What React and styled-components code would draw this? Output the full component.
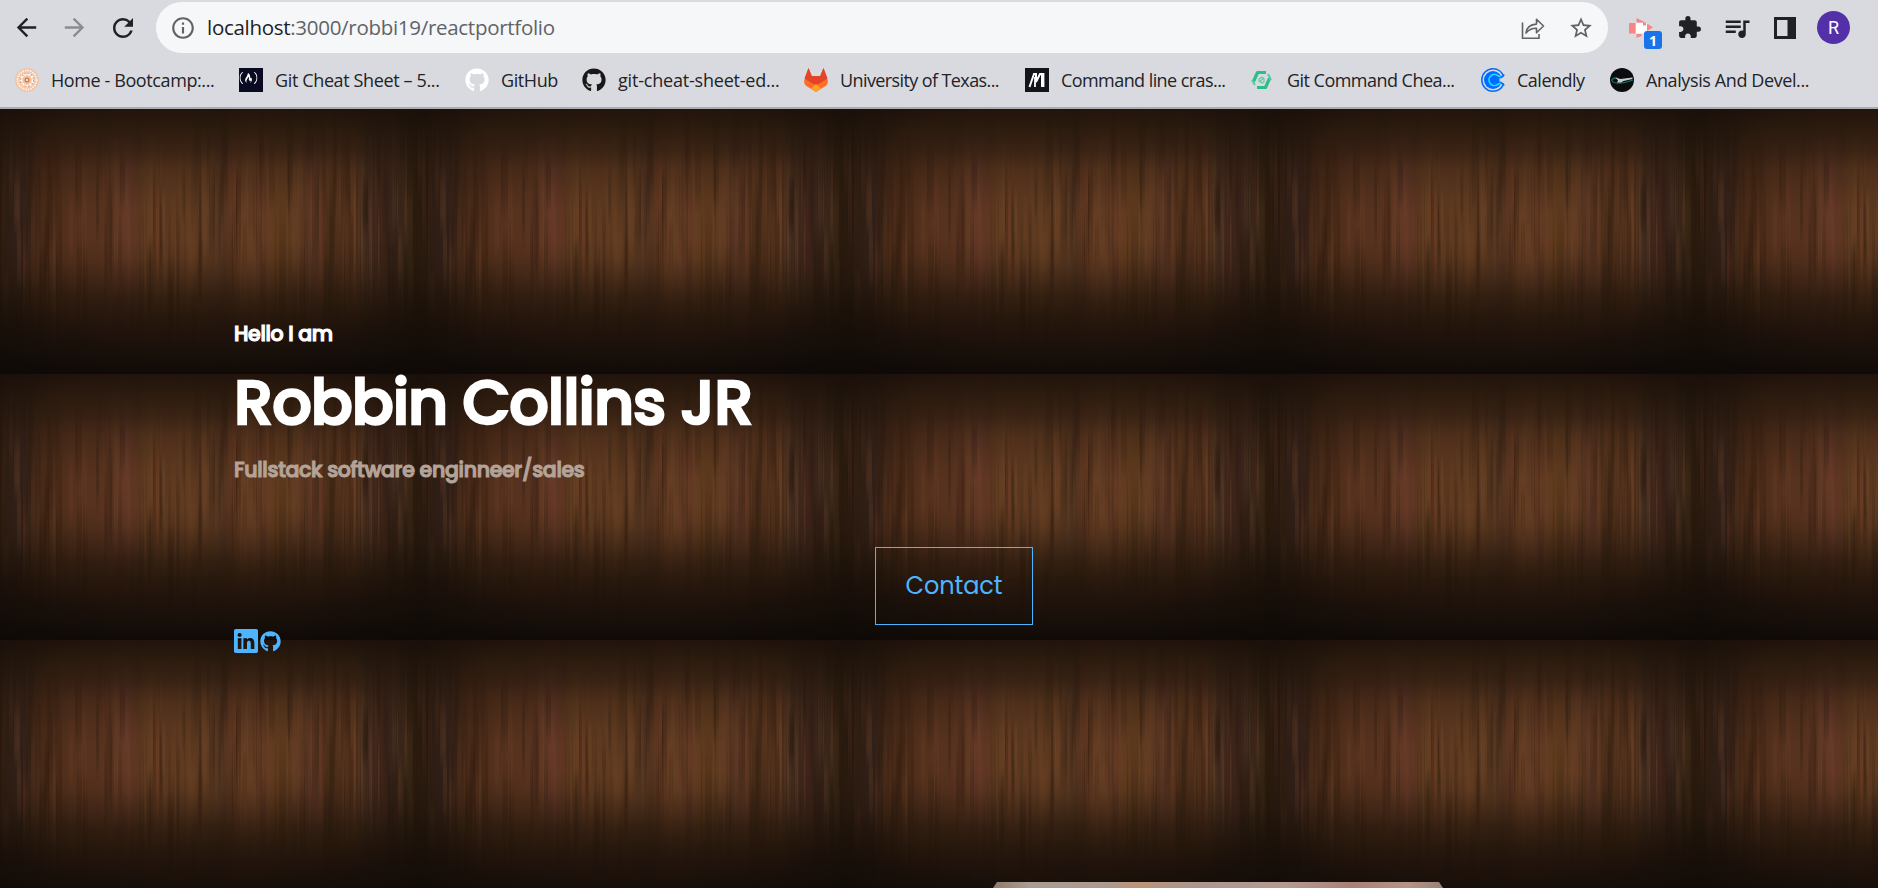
import React from "react";
import styled, { createGlobalStyle } from "styled-components";
import { MdArrowBack, MdArrowForward, MdRefresh, MdInfoOutline, MdStarBorder, MdExtension, MdQueueMusic } from "react-icons/md";
import { BsLinkedin } from "react-icons/bs";
import { FaGithub, FaFreeCodeCamp } from "react-icons/fa";

const TILE_W = 426;
const TILE_H = 266;

const planks = [
  [0, "#2b1b0f"], [22, "#33211a"], [30, "#3a2316"], [46, "#492a17"], [72, "#55311d"],
  [112, "#58331f"], [127, "#643828"], [136, "#5a3520"], [148, "#623d21"], [170, "#5e3920"],
  [196, "#613c20"], [222, "#543521"], [232, "#603820"], [246, "#663e23"], [262, "#6a3e27"],
  [276, "#5e3a1d"], [298, "#5f3a22"], [314, "#573323"], [326, "#4e3019"], [340, "#4c2d1a"],
  [354, "#55321c"], [361, "#47301e"], [366, "#3a261b"], [384, "#40261c"], [396, "#35241a"],
  [408, "#302213"], [416, "#2c1b0d"], [426, "#2d1d12"],
];

const shadeStops = [
  [0, "#20120c", 0.97], [16, "#22150b", 0.88], [42, "#25170d", 0.66], [62, "#28180e", 0.34],
  [88, "#28180e", 0.1], [105, "#28180e", 0], [132, "#28180e", 0], [150, "#26170c", 0.14],
  [168, "#24160c", 0.4], [186, "#20140a", 0.66], [206, "#1e1209", 0.84], [226, "#1b100a", 0.93],
  [246, "#160e09", 0.96], [266, "#120b08", 1],
];

const makeStreaks = (count) => {
  let s = 7919;
  const next = () => {
    s = (s * 16807) % 2147483647;
    return s / 2147483647;
  };
  return Array.from({ length: count }, (_, id) => {
    const tone = next();
    return {
      id,
      x: Math.floor(next() * TILE_W),
      y: Math.floor(next() * 190) - 30,
      w: 1 + Math.floor(next() * 7),
      h: 60 + Math.floor(next() * 110),
      tone: tone < 0.5 ? "dark" : tone < 0.88 ? "light" : "red",
      opacity: 0.06 + next() * 0.18,
    };
  });
};

const streaks = makeStreaks(330);

const Global = createGlobalStyle`
  html, body { margin: 0; height: 100%; overflow: hidden; }
  * { box-sizing: border-box; }
`;

const Window = styled.div`
  display: flex;
  flex-direction: column;
  height: 888px;
  width: 1878px;
  overflow: hidden;
  font-family: "Segoe UI", "Open Sans", "Noto Sans", sans-serif;
`;

const Chrome = styled.header`
  height: 109px;
  flex: none;
  background: #d9dadf;
  border-bottom: 2px solid #a9adb0;
`;

const Toolbar = styled.div`
  display: flex;
  align-items: center;
  height: 55px;
  padding-left: 12px;
`;

const NavButton = styled.span`
  display: flex;
  width: 48px;
  color: ${(p) => (p.$muted ? "#8b8c91" : "#202124")};
`;

const AddressBar = styled.div`
  display: flex;
  align-items: center;
  width: 1452px;
  height: 51px;
  padding: 0 14px;
  border-radius: 26px;
  background: #f6f7f9;
  color: #5f6368;
`;

const Url = styled.span`
  flex: 1;
  margin-left: 11px;
  padding-bottom: 1px;
  font-size: 20.5px;
  letter-spacing: -0.29px;
  white-space: nowrap;
  b { font-weight: 400; color: #202124; }
`;

const AddressActions = styled.span`
  display: flex;
  align-items: center;
  gap: 23px;
`;

const Extensions = styled.div`
  display: flex;
  align-items: center;
  margin-left: 21px;
  color: #202124;
`;

const ExtensionSlot = styled.span`
  position: relative;
  display: flex;
  width: ${(p) => p.$width}px;
`;

const Badge = styled.span`
  position: absolute;
  left: 15px;
  top: 14px;
  width: 18px;
  height: 18px;
  border-radius: 3px;
  background: #1a73e8;
  color: #fff;
  font: 700 14px/19px "Open Sans", sans-serif;
  text-align: center;
`;

const Avatar = styled.span`
  width: 33px;
  height: 33px;
  border-radius: 50%;
  background: #5430a8;
  color: #fff;
  font: 400 18px/34px Roboto, sans-serif;
  text-align: center;
`;

const Bookmarks = styled.nav`
  display: flex;
  align-items: center;
  height: 50px;
  padding-left: 15px;
`;

const Bookmark = styled.a`
  display: flex;
  flex: none;
  align-items: center;
  gap: 12px;
  width: ${(p) => p.$width}px;
  color: #222327;
  font-size: 18px;
  line-height: 24px;
  letter-spacing: ${(p) => p.$tracking}px;
  white-space: nowrap;
  svg { flex: none; }
`;

const BookmarkLabel = styled.span`
  padding-bottom: 1px;
`;

const Page = styled.main`
  position: relative;
  isolation: isolate;
  display: flex;
  flex: 1;
  flex-direction: column;
  min-height: 0;
  padding: 0 234px;
  background: #1e110b;
  font-family: Poppins, Inter, sans-serif;
  color: #fff;
  > * { flex-shrink: 0; }
`;

const Backdrop = styled.svg`
  position: absolute;
  inset: 0;
  z-index: -1;
  width: 100%;
  height: 100%;
`;

const Line = styled.h5`
  margin: ${(p) => p.$top}px 0 0;
  font-size: 20.5px;
  line-height: 30px;
  font-weight: 500;
  -webkit-text-stroke: 1.1px currentColor;
  letter-spacing: ${(p) => p.$tracking}px;
  color: ${(p) => (p.$light ? "#b3a398" : "#fff")};
`;

const Name = styled.h1`
  margin: 18px 0 0;
  font-size: 62px;
  line-height: 72px;
  font-weight: 500;
  -webkit-text-stroke: 2.6px currentColor;
  letter-spacing: -1.02px;
  white-space: nowrap;
`;

const Contact = styled.a`
  display: flex;
  align-items: center;
  justify-content: center;
  align-self: flex-start;
  width: 158px;
  height: 78px;
  margin: 62px 0 0 641px;
  padding-bottom: 1px;
  border: 1px solid #4db5ff;
  color: #4db5ff;
  font-size: 24px;
  letter-spacing: -0.1px;
`;

const Socials = styled.div`
  display: flex;
  align-items: center;
  gap: 2px;
  margin-top: 4px;
  color: #4db5ff;
`;

const Portrait = styled.div`
  align-self: flex-start;
  width: 450px;
  height: 6px;
  margin: 229px 0 0 759px;
  clip-path: polygon(4px 0, 446px 0, 450px 100%, 0 100%);
  background: linear-gradient(90deg, #8f7b68, #aa9c92 8%, #ad9990 25%, #ba9478 32%, #aa968f 45%, #b59a92 65%, #a98078 80%, #b59388 92%, #9a8078);
`;

const streakTones = { dark: "#1d1007", light: "#7c4c2c", red: "#733726" };

const WoodTexture = () => (
  <Backdrop aria-hidden="true">
    <defs>
      <linearGradient id="planks">
        {planks.map(([x, c]) => <stop key={x} offset={x / TILE_W} stopColor={c} />)}
      </linearGradient>
      <linearGradient id="shade" x2="0" y2="1">
        {shadeStops.map(([y, c, a]) => (
          <stop key={y} offset={y / TILE_H} stopColor={c} stopOpacity={a} />
        ))}
      </linearGradient>
      {Object.entries(streakTones).map(([name, c]) => (
        <linearGradient key={name} id={name} x2="0" y2="1">
          <stop offset="0" stopColor={c} stopOpacity="0" />
          <stop offset=".3" stopColor={c} />
          <stop offset=".7" stopColor={c} />
          <stop offset="1" stopColor={c} stopOpacity="0" />
        </linearGradient>
      ))}
      <radialGradient id="corners" cx=".48" cy=".42" r=".8">
        <stop offset=".6" stopColor="#080705" stopOpacity="0" />
        <stop offset="1" stopColor="#080705" stopOpacity=".5" />
      </radialGradient>
      <pattern id="wood" width={TILE_W} height={TILE_H} y="-1" patternUnits="userSpaceOnUse">
        <rect width={TILE_W} height={TILE_H} fill="url(#planks)" />
        {streaks.map((k) => (
          <rect key={k.id} x={k.x} y={k.y} width={k.w} height={k.h} fill={`url(#${k.tone})`} opacity={k.opacity} />
        ))}
        <rect width={TILE_W} height={TILE_H} fill="url(#shade)" />
        <rect width={TILE_W} height={TILE_H} fill="url(#corners)" />
      </pattern>
    </defs>
    <rect width="100%" height="100%" fill="url(#wood)" />
  </Backdrop>
);

const Share = () => (
  <svg width="24" height="24" viewBox="0 0 24 24" fill="none" stroke="#5f6368" strokeWidth="1.600">
    <path d="M1.500 6.500v15.700h16.500V18" />
    <path d="M5 17c.6-5.500 4-8.600 10.500-8.900V3.200l7 6.800-7 6.800v-4.600C11 12 8 13.200 5 17z" strokeLinejoin="round" />
  </svg>
);

const CastArrow = () => (
  <svg width="24" height="22" viewBox="0 0 24 22">
    <path d="M0 6h6.500v10.500H0zM7.500 1l9 4.500h-9zM7.500 17h5v2l-5 2zM18 6.500l6 4-6 3.500z" fill="#fb8583" />
    <path d="M7 6h11v10.500H7z" fill="#fff" />
    <path d="M14 5.500h3v3h-3z" fill="#fb8583" />
  </svg>
);

const SidePanel = () => (
  <svg width="22" height="22" viewBox="0 0 22 22">
    <path d="M1.500 1.500h19v19h-19z" fill="none" stroke="#202124" strokeWidth="3" />
    <path d="M13.500 1h8v20h-8z" fill="#202124" />
  </svg>
);

const Seal = () => (
  <svg width="24" height="24" viewBox="0 0 24 24" fill="none">
    <circle cx="12" cy="12" r="12" fill="#f0c3a5" />
    <circle cx="12" cy="12" r="9.500" stroke="#fff3e9" strokeWidth="2" strokeDasharray="1.500 1" />
    <circle cx="12" cy="12" r="6" stroke="#fff" strokeWidth="2.500" strokeDasharray="3 1" />
    <circle cx="12" cy="12" r="6.600" stroke="#dd9b70" strokeWidth="1" strokeDasharray="2 1.500" />
    <circle cx="12" cy="12" r="2.500" fill="#d87b42" />
    <circle cx="12" cy="12" r="1" fill="#fff" />
  </svg>
);

const CodeCamp = () => (
  <svg width="24" height="24" viewBox="0 0 24 24">
    <path d="M0 0h24v24H0z" fill="#0a0a23" />
    <FaFreeCodeCamp x="0.500" y="1" width="23" height="22" color="#fff" />
  </svg>
);

const Fox = () => (
  <svg width="24" height="24" viewBox="0 0 24 24">
    <path d="M4.500 0 7.800 8h8.400l3.300-8 4 11.500c.8 2.500.2 5-1.900 6.600L12 24l-9.600-5.900C.3 16.500-.3 14 .5 11.500z" fill="#fc6d26" />
    <path d="M4.500 0 7.800 8h8.400l3.300-8 4 10.500L12 17.500.5 10.500z" fill="#e24329" />
    <path d="m12 16 5 4.500-5 3.500-5-3.500z" fill="#fca326" />
  </svg>
);

const MonoM = () => (
  <svg width="24" height="24" viewBox="0 0 24 24">
    <path d="M0 0h24v24H0z" fill="#14141c" />
    <path d="M4.500 19 9 6h2v8l4-8h2v13" fill="none" stroke="#fff" strokeWidth="2" />
    <path d="M10 19V9M18.500 19V5" fill="none" stroke="#fff" strokeWidth="1.800" />
  </svg>
);

const HexSwirl = () => (
  <svg width="24" height="24" viewBox="0 0 24 24" fill="none">
    <path d="M2.500 13.500 6.500 4.500H15M18.500 10.500 14.500 19.500H6" stroke="#2abf88" strokeWidth="3.200" strokeLinejoin="round" />
    <path d="m1 12 3 5M20 12l-3-6" stroke="#55caa0" strokeWidth="2" />
    <path d="m8 11 3-2 2 2v3l-2 1-3-2zM8 14l5-4" stroke="#62caa5" strokeWidth="1.200" />
  </svg>
);

const CalendlyMark = () => (
  <svg width="24" height="24" viewBox="0 0 24 24" fill="none">
    <circle cx="12" cy="12" r="11.200" stroke="#006bff" strokeWidth="1.500" strokeDasharray="62 8.400" strokeDashoffset="-4.200" />
    <circle cx="12" cy="12" r="9" fill="#006bff" />
    <path d="M22.500 8.500h-3.500c-1 0-1.500-.2-2.200-.9A5.500 5.500 0 1 0 16.800 16.400c.7-.7 1.200-.9 2.200-.9h3.500" stroke="#1ce5ff" strokeWidth="1.600" />
    <path d="M18.500 10.300H24v3.400h-5.500z" fill="#d9dadf" />
    <path d="M23 6.500c-.5 1.700-1.500 2.500-3.500 2.500M23 17.500c-.5-1.700-1.500-2.500-3.500-2.500" stroke="#006bff" strokeWidth="1.600" />
  </svg>
);

const Orbit = () => (
  <svg width="24" height="24" viewBox="0 0 24 24" fill="none">
    <circle cx="12" cy="12" r="12" fill="#0b0c0d" />
    <path d="M7 10c-4 0-6 1.500-5 3 2 3 11 3 21-1" stroke="#16736f" strokeWidth="1.300" />
    <path d="m5.500 9.500 5 1.500 12-1.500v1.500l-9 2-2.500 1.500H7l1-2z" fill="#c9cccb" />
  </svg>
);

const bookmarks = [
  { label: "Home - Bootcamp:...", width: 224, tracking: -0.4, icon: <Seal /> },
  { label: "Git Cheat Sheet – 5...", width: 226, tracking: -0.37, icon: <CodeCamp /> },
  { label: "GitHub", width: 117, tracking: -0.4, icon: <FaGithub size={24} color="#fff" /> },
  { label: "git-cheat-sheet-ed...", width: 222, tracking: -0.2, icon: <FaGithub size={24} color="#191717" /> },
  { label: "University of Texas...", width: 221, tracking: -0.6, icon: <Fox /> },
  { label: "Command line cras...", width: 226, tracking: -0.57, icon: <MonoM /> },
  { label: "Git Command Chea...", width: 230, tracking: -0.53, icon: <HexSwirl /> },
  { label: "Calendly", width: 129, tracking: -0.5, icon: <CalendlyMark /> },
  { label: "Analysis And Devel...", width: 220, tracking: -0.4, icon: <Orbit /> },
];

export default function App() {
  return (
    <Window>
      <Global />
      <Chrome>
        <Toolbar>
          <NavButton><MdArrowBack size={29} /></NavButton>
          <NavButton $muted><MdArrowForward size={29} /></NavButton>
          <NavButton><MdRefresh size={30} /></NavButton>
          <AddressBar>
            <MdInfoOutline size={26} />
            <Url><b>localhost</b>:3000/robbi19/reactportfolio</Url>
            <AddressActions>
              <Share />
              <MdStarBorder size={26} />
            </AddressActions>
          </AddressBar>
          <Extensions>
            <ExtensionSlot $width={48}><CastArrow /><Badge>1</Badge></ExtensionSlot>
            <ExtensionSlot $width={45}><MdExtension size={25} /></ExtensionSlot>
            <ExtensionSlot $width={52}><MdQueueMusic size={30} /></ExtensionSlot>
            <ExtensionSlot $width={43}><SidePanel /></ExtensionSlot>
            <Avatar>R</Avatar>
          </Extensions>
        </Toolbar>
        <Bookmarks>
          {bookmarks.map((b) => (
            <Bookmark key={b.label} $width={b.width} $tracking={b.tracking}>
              {b.icon}
              <BookmarkLabel>{b.label}</BookmarkLabel>
            </Bookmark>
          ))}
        </Bookmarks>
      </Chrome>
      <Page>
        <WoodTexture />
        <Line $top={210} $tracking={-0.35}>Hello I am</Line>
        <Name>Robbin Collins JR</Name>
        <Line as="h4" $top={16} $tracking={-0.3} $light>Fullstack software enginneer/sales</Line>
        <Contact>Contact</Contact>
        <Socials>
          <BsLinkedin size={24} />
          <FaGithub size={21} />
        </Socials>
        <Portrait />
      </Page>
    </Window>
  );
}
